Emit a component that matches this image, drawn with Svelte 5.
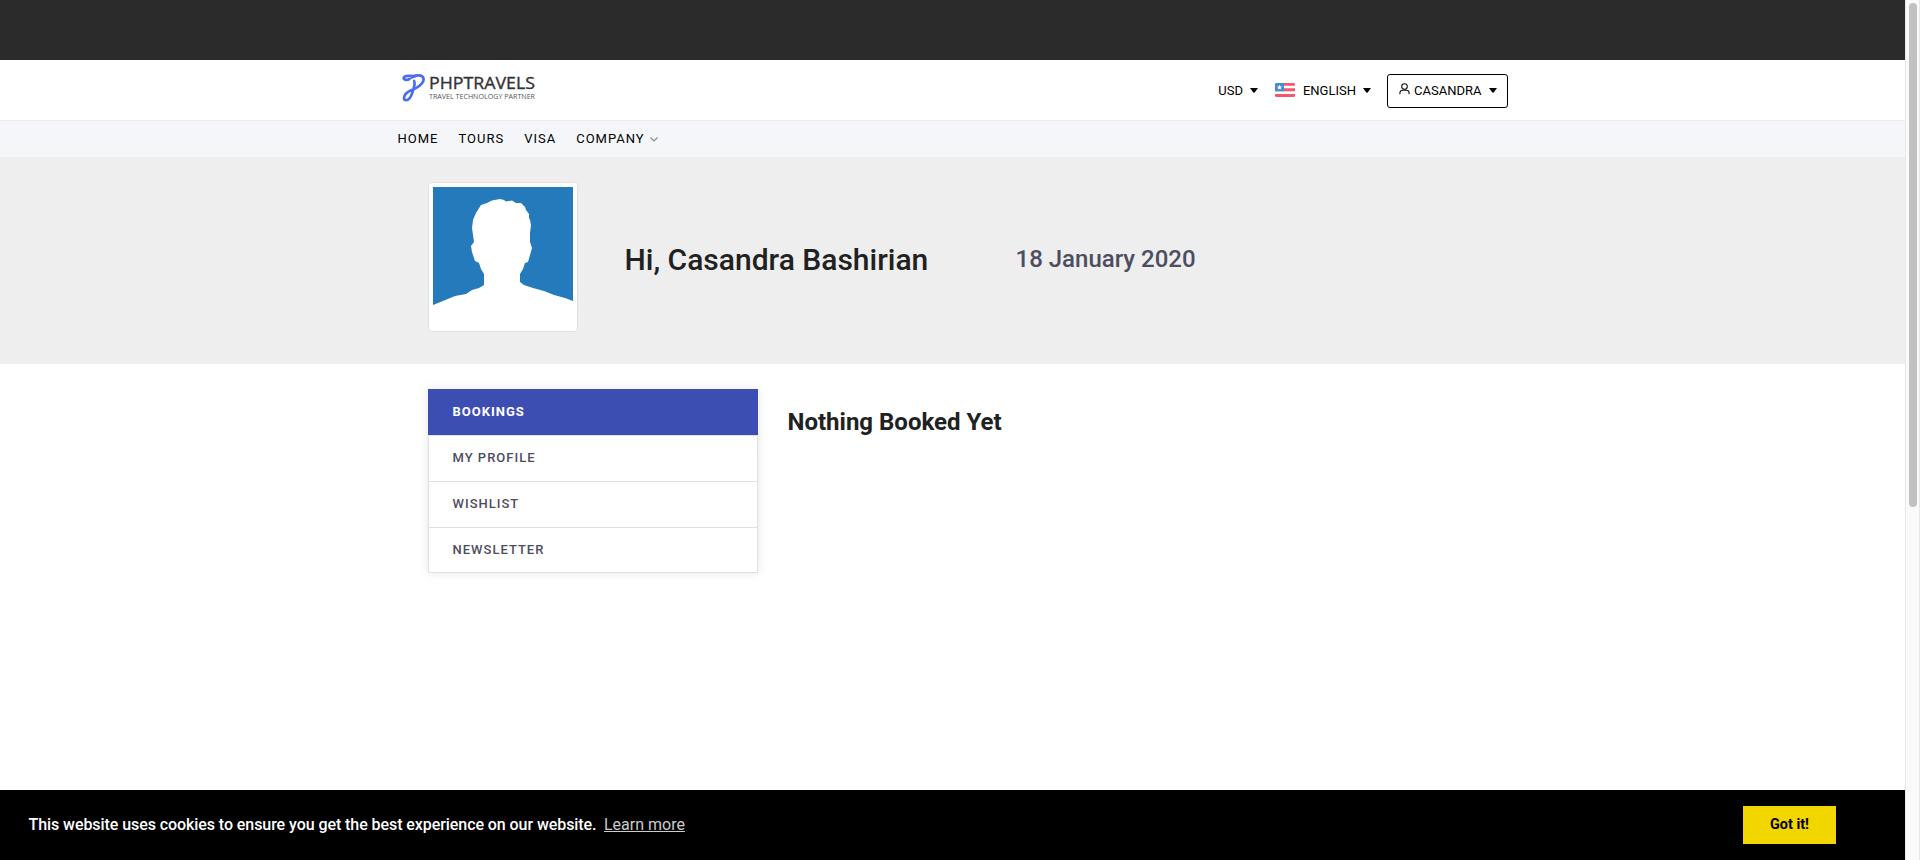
<script>
  const nav = ['Home', 'Tours', 'Visa', 'Company'];
  const menu = ['Bookings', 'My Profile', 'Wishlist', 'Newsletter'];
</script>

{#snippet caret()}
  <svg class="caret" width="8" height="5" viewBox="0 0 8 5"><path d="M0 0h8L4.6 4.4q-.6.6-1.2 0z" /></svg>
{/snippet}

<div class="window">
  <div class="page">
    <div class="topbar"></div>
    <header>
      <a class="logo" href="#home" aria-label="PHPTRAVELS">
        <svg width="136" height="32" viewBox="0 0 136 32">
          <g fill="none" stroke="#4a6cf3" stroke-linecap="round" stroke-linejoin="round">
            <path stroke-width="2.7" d="M8 6.2C4.8 7.8 2 6 3 4C5 1.3 10 4 15 2.6C20.5 1.4 23.6 4 22.2 8.2C20.4 12.8 16 14.8 10.6 17C6 19 3 22 3 25C3 27.9 6.6 28 8.8 25C11 22 11.8 18.6 12.8 14.6C13.8 11.8 14.2 10.4 13.2 8" />
            <path stroke-width="1.8" d="M8 6.2C10.4 5 12.8 4.2 15 3.4" />
          </g>
          <text class="brand" x="28" y="16" textLength="106" lengthAdjust="spacingAndGlyphs">PHPTRAVELS</text>
          <text class="tag" x="28" y="26" textLength="106" lengthAdjust="spacingAndGlyphs">TRAVEL TECHNOLOGY PARTNER</text>
        </svg>
      </a>
      <div class="tools">
        <div class="pick usd"><span>USD</span>{@render caret()}</div>
        <div class="pick lang">
          <svg class="flag" width="20" height="14" viewBox="0 0 20 14">
            <rect width="20" height="14" rx="1.5" fill="#f45767" />
            <path d="M0 2.8h20v2.5H0zM0 8.2h20V11H0z" fill="#fff" />
            <path d="M1.5 0H9v8.2H0V1.5Q0 0 1.5 0z" fill="#4689df" />
            <path d="M4.5 1.8l.8 1.6 1.8.2-1.3 1.2.4 1.8-1.7-.9-1.6.9.3-1.8-1.3-1.2 1.8-.2z" fill="#fff" />
          </svg>
          <span>ENGLISH</span>{@render caret()}
        </div>
        <button class="account">
          <svg width="11" height="12" viewBox="0 0 11 12" fill="none" stroke="#111" stroke-width="1.1"><circle cx="5.5" cy="3.5" r="2.8" /><path d="M.9 11.2V10Q1 7.3 3.7 7.3h3.6Q10 7.3 10.1 10v1.2" /></svg>
          <span>CASANDRA</span>{@render caret()}
        </button>
      </div>
    </header>

    <nav>
      {#each nav as item}
        <a href="#{item}">{item}</a>
      {/each}
      <svg width="8" height="5" viewBox="0 0 8 5" fill="none" stroke="#888" stroke-width="1.1"><path d="M.5.5L4 4 7.5.5" /></svg>
    </nav>

    <section class="hero">
      <div class="avatar">
        <svg width="140" height="140" viewBox="0 0 140 140">
          <rect width="140" height="140" fill="#257abc" />
          <path fill="#fff" d="M0 118L10 114 22 109 33 107 39 103 46 101 51 98V87L48 82 46 76 42 74 39 65 38 59 41 55 39 41 40 33 43 26 48 18 54 16 59 13.5 67 12 71 13 73 14.5 79 13.5 83 16 88 16 92 20 93 23 96 27 96 31 97 33 98 38 97 46 97 55 99 61 97 68 95 75 92 76 90 82 87 87V95L91 98 100 101 111 104 121 108 132 111 140 114V140H0z" />
        </svg>
      </div>
      <h1>Hi, Casandra Bashirian</h1>
      <div class="date">18 January 2020</div>
    </section>

    <main>
      <aside>
        {#each menu as item, i}
          <a class:active={i === 0} href="#{item}">{item}</a>
        {/each}
      </aside>
      <h2>Nothing Booked Yet</h2>
    </main>

    <footer>
      <p><span class="msg">This website uses cookies to ensure you get the best experience on our website.</span><a href="#cookies">Learn more</a></p>
      <button>Got it!</button>
    </footer>
  </div>
  <div class="track"><div class="thumb"></div></div>
</div>

<style>
  :global(body) { overflow: hidden; background: #fff; }
  * { box-sizing: border-box; }
  .window { display: flex; width: 1920px; height: 860px; font-family: Roboto, sans-serif; color: #000; white-space: nowrap; }
  .page { display: flex; flex-direction: column; width: 1905px; height: 860px; }
  .topbar { height: 60px; background: #2b2b2b; }
  a { color: inherit; text-decoration: none; }
  header { display: flex; justify-content: space-between; height: 60px; padding: 0 397px 0 401px; }
  .logo { height: 32px; margin-top: 13px; }
  .logo svg { display: block; overflow: visible; }
  .brand { font: 16.5px "Open Sans", sans-serif; fill: #333; stroke: #333; stroke-width: .35px; }
  .tag { font: 7.3px "Open Sans", sans-serif; fill: #555; }
  .tools { display: flex; align-items: center; height: 34px; margin-top: 14px; font-size: 13px; }
  .pick { display: flex; align-items: center; height: 34px; padding-bottom: 2px; }
  .caret { display: block; fill: #000; margin-left: 8px; }
  .usd .caret { margin-left: 7px; }
  .lang { margin: 0 16px 0 17px; }
  .flag { margin-right: 8px; }
  .lang .caret { margin-left: 7px; }
  .account { display: flex; align-items: center; width: 121px; height: 34px; padding: 0 0 2px 11px; border: 1px solid #000; border-radius: 3px; background: #fff; color: #000; font: 13px Roboto, sans-serif; }
  .account > svg:first-child { margin: -2px 4px 0 0; }
  nav { display: flex; align-items: center; height: 37px; padding: 0 0 2px 397.5px; border-top: 1px solid #e9eaeb; background: #f4f6f9; font-size: 13px; letter-spacing: 1px; text-transform: uppercase; }
  nav a { margin-right: 20px; }
  nav a:last-of-type { margin-right: 5px; }
  nav svg { margin-top: 2px; }
  .hero { display: flex; height: 207px; padding: 25px 0 0 428px; background: #eee; }
  .avatar { width: 150px; height: 150px; padding: 4px; border: 1px solid #dee2e6; border-radius: 4px; background: #fff; }
  .avatar svg { display: block; }
  h1 { width: 391px; margin: 58px 0 0 46.5px; font-size: 30px; line-height: 40px; font-weight: 500; color: #212121; }
  .date { margin-top: 61px; font-size: 24px; line-height: 32px; font-weight: 500; color: #4d4d60; }
  main { display: flex; align-items: flex-start; flex: 1; padding: 25px 0 0 428px; }
  aside { width: 330px; height: 184px; border: 1px solid #e1e1e1; border-top: 0; box-shadow: 0 0 10px rgba(0, 0, 0, .1); }
  aside a { display: flex; align-items: center; height: 46px; padding: 0 0 2px 23.5px; border-top: 1px solid #e1e1e1; font-size: 13px; font-weight: 500; letter-spacing: 1px; text-transform: uppercase; color: #4d4d60; }
  aside a.active { margin: 0 -1px; padding-left: 24.5px; border-color: #3d4eb3; background: #3d4eb3; color: #fff; font-weight: 700; }
  h2 { margin: 17px 0 0 29.5px; font-size: 24px; line-height: 32px; font-weight: 700; color: #212121; }
  footer { display: flex; align-items: center; justify-content: space-between; height: 70px; padding: 0 69px 0 28.5px; background: #000; color: #fff; }
  footer p { margin: 0 0 2px; font-size: 16px; }
  .msg { font-weight: 500; letter-spacing: -.07px; }
  footer a { margin-left: 7.5px; color: #ccc; text-decoration: underline; }
  footer button { width: 93px; height: 38px; padding: 0 0 1px; border: 0; background: #f1d600; font: 700 14.4px Roboto, sans-serif; color: #000; }
  .track { width: 15px; height: 860px; padding: 3px 0 0 3px; border: 1px solid #e8e8e8; border-width: 0 1px; background: #fafafa; }
  .thumb { width: 8px; height: 504px; border-radius: 4px; background: #c1c1c1; }
</style>
